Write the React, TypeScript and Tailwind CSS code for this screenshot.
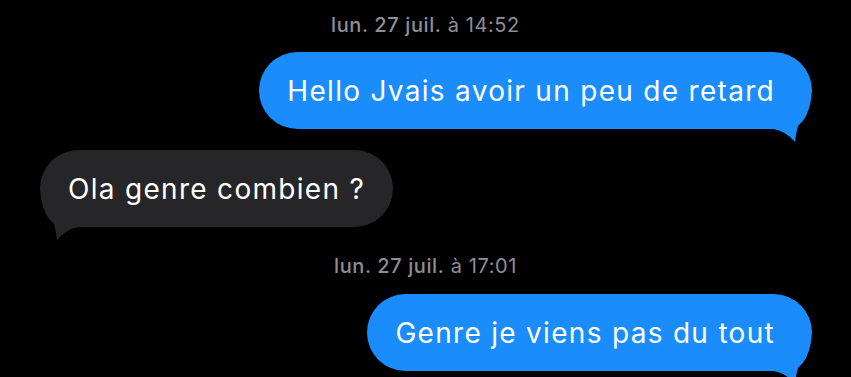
import React from 'react';

const BlueTail = () => (
  <svg
    className="absolute right-[-2px] bottom-[-14px] w-[50px] h-[45px]"
    viewBox="0 0 50 45"
  >
    <path d="M0 31 L9 31 Q22 33 31 44 Q32 35 34 28 Q44 20 47 2 L40 0 L0 0 Z" fill="#1b8cfb" />
  </svg>
);

const GrayTail = () => (
  <svg
    className="absolute left-[-2px] bottom-[-14px] w-[50px] h-[45px]"
    viewBox="0 0 50 45"
  >
    <path d="M50 31 L41 31 Q28 33 19 44 Q18 35 16 28 Q6 20 3 2 L10 0 L50 0 Z" fill="#262628" />
  </svg>
);

const Timestamp = ({ date, time, className }: { date: string; time: string; className: string }) => (
  <div className={`text-center text-[20px] leading-[24px] tracking-[0.6px] text-[#8e8e93] ${className}`}>
    <span className="font-medium">{date}</span> à {time}
  </div>
);

const Sent = ({ text, className }: { text: string; className: string }) => (
  <div
    className={`relative self-end mr-[39px] h-[77px] flex items-center rounded-full bg-[#1b8cfb] pl-[28px] pr-[37px] text-white text-[28px] tracking-[1.3px] ${className}`}
  >
    <span className="relative z-10">{text}</span>
    <BlueTail />
  </div>
);

const Received = ({ text, className }: { text: string; className: string }) => (
  <div
    className={`relative self-start ml-[40px] h-[77px] flex items-center rounded-full bg-[#262628] px-[28px] text-white text-[28px] tracking-[1.3px] ${className}`}
  >
    <span className="relative z-10">{text}</span>
    <GrayTail />
  </div>
);

export default function App() {
  return (
    <div
      className="w-full h-[377px] bg-black overflow-hidden flex flex-col"
      style={{ fontFamily: 'Inter, "Noto Sans", sans-serif' }}
    >
      <Timestamp date="lun. 27 juil." time="14:52" className="mt-[13px]" />
      <Sent text="Hello Jvais avoir un peu de retard" className="mt-[15px] shrink-0" />
      <Received text="Ola genre combien ?" className="mt-[21px] shrink-0" />
      <Timestamp date="lun. 27 juil." time="17:01" className="mt-[27px]" />
      <Sent text="Genre je viens pas du tout" className="mt-[16px] shrink-0" />
    </div>
  );
}
